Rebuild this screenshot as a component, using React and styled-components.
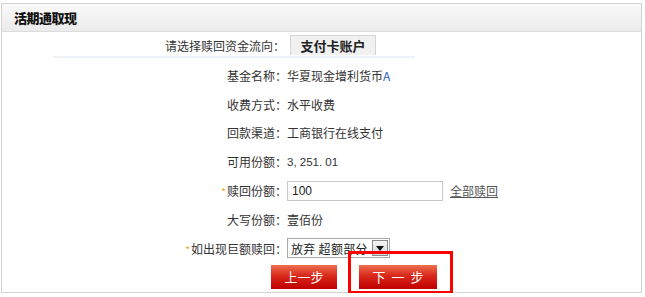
import React from "react";
import styled, { createGlobalStyle } from "styled-components";

const Global = createGlobalStyle`
  html, body { margin: 0; padding: 0; background: #fff; }
  body { font-family: "Noto Sans CJK SC", "Liberation Sans", sans-serif; font-size: 12px; color: #333; }
`;

const Box = styled.div`
  margin: 3px 0 0 1px;
  width: 641px;
  height: 290px;
  border: 1px solid #d2d2d2;
  box-sizing: border-box;
  display: flex;
  flex-direction: column;
`;

const Header = styled.div`
  height: 27px;
  background: linear-gradient(#f9f9f9, #ebebeb);
  border-bottom: 1px solid #dcdcdc;
  display: flex;
  align-items: center;
  padding-left: 12px;
  font-weight: 900;
  font-size: 13px;
  color: #111;
  letter-spacing: -0.5px;
`;

const TabRow = styled.div`
  display: flex;
  align-items: flex-end;
  margin: 2px 0 0 51px;
  width: 362px;
  height: 22px;
  border-bottom: 2px solid #eef2f6;
`;

const TabLabel = styled.div`
  width: 232px;
  text-align: right;
  line-height: 20px;
  color: #333;
`;

const Tab = styled.div`
  margin-left: 5px;
  width: 86px;
  height: 20px;
  margin-bottom: 1px;
  box-sizing: border-box;
  background: #f1f1f1;
  border: 1px solid #d6d6d6;
  border-bottom: none;
  font-weight: bold;
  font-size: 13px;
  color: #222;
  display: flex;
  align-items: center;
  justify-content: center;
`;

const Form = styled.div`
  margin-top: 3px;
  display: flex;
  flex-direction: column;
`;

const Row = styled.div`
  height: 28.8px;
  display: flex;
  align-items: center;
`;

const Label = styled.div`
  width: 285px;
  text-align: right;
  color: #333;
  white-space: nowrap;
`;

const Star = styled.span`
  color: #f0a020;
  font-size: 10px;
  margin-right: 1px;
`;

const Value = styled.div`
  color: #333;
  font-size: ${(p) => (p.$num ? "11.5px" : "12px")};
  font-family: ${(p) => (p.$num ? '"Liberation Sans", sans-serif' : "inherit")};
`;

const Blue = styled.span`
  color: #2a60c0;
`;

const Input = styled.input`
  width: 156px;
  height: 20px;
  box-sizing: border-box;
  border: 1px solid #c9c9c9;
  padding: 0 4px;
  font-family: "Liberation Sans", sans-serif;
  font-size: 12px;
  color: #222;
  outline: none;
`;

const Link = styled.a`
  margin-left: 7px;
  color: #555;
  text-decoration: underline;
  cursor: pointer;
`;

const Select = styled.div`
  width: 103px;
  height: 20px;
  box-sizing: border-box;
  border: 1px solid #a9a9a9;
  display: flex;
  align-items: center;
  background: #fff;
`;

const SelectText = styled.div`
  flex: 1;
  padding-left: 3px;
  font-size: 12px;
  letter-spacing: 0.3px;
  color: #222;
  white-space: nowrap;
`;

const Arrow = styled.div`
  width: 16px;
  height: 16px;
  margin-right: 1px;
  box-sizing: border-box;
  border: 1px solid #8a8a8a;
  background: linear-gradient(#f4f4f4, #d8d8d8);
  display: flex;
  align-items: center;
  justify-content: center;
  flex: none;
`;

const Buttons = styled.div`
  margin-left: 269px;
  display: flex;
  gap: 22px;
  align-items: center;
`;

const RedButton = styled.button`
  width: ${(p) => p.$w}px;
  height: 24px;
  border: none;
  padding: 0;
  background: linear-gradient(#ee7050 0%, #d8281a 45%, #c00000 100%);
  color: #fff;
  font-family: "Noto Sans CJK SC", sans-serif;
  font-size: 13px;
  letter-spacing: ${(p) => p.$ls}px;
  text-indent: ${(p) => p.$ls}px;
  cursor: pointer;
`;

const Highlight = styled.div`
  position: relative;
  display: flex;
  &::after {
    content: "";
    position: absolute;
    left: -11px;
    right: -16px;
    top: -14px;
    bottom: -5px;
    border: 3px solid #f00;
    pointer-events: none;
  }
`;

export default function App() {
  return (
    <>
      <Global />
      <Box>
        <Header>活期通取现</Header>
        <TabRow>
          <TabLabel>请选择赎回资金流向：</TabLabel>
          <Tab>支付卡账户</Tab>
        </TabRow>
        <Form>
          <Row>
            <Label>基金名称：</Label>
            <Value>华夏现金增利货币<Blue>A</Blue></Value>
          </Row>
          <Row>
            <Label>收费方式：</Label>
            <Value>水平收费</Value>
          </Row>
          <Row>
            <Label>回款渠道：</Label>
            <Value>工商银行在线支付</Value>
          </Row>
          <Row>
            <Label>可用份额：</Label>
            <Value $num>3, 251. 01</Value>
          </Row>
          <Row>
            <Label><Star>*</Star>赎回份额：</Label>
            <Input defaultValue="100" />
            <Link>全部赎回</Link>
          </Row>
          <Row>
            <Label>大写份额：</Label>
            <Value>壹佰份</Value>
          </Row>
          <Row>
            <Label><Star>*</Star>如出现巨额赎回：</Label>
            <Select>
              <SelectText>放弃 超额部分</SelectText>
              <Arrow>
                <svg width="8" height="5" viewBox="0 0 8 5"><path d="M0 0h8L4 5z" fill="#111" /></svg>
              </Arrow>
            </Select>
          </Row>
          <Row>
            <Buttons>
              <RedButton $w={66} $ls={0}>上一步</RedButton>
              <Highlight>
                <RedButton $w={78} $ls={6}>下一步</RedButton>
              </Highlight>
            </Buttons>
          </Row>
        </Form>
      </Box>
    </>
  );
}
